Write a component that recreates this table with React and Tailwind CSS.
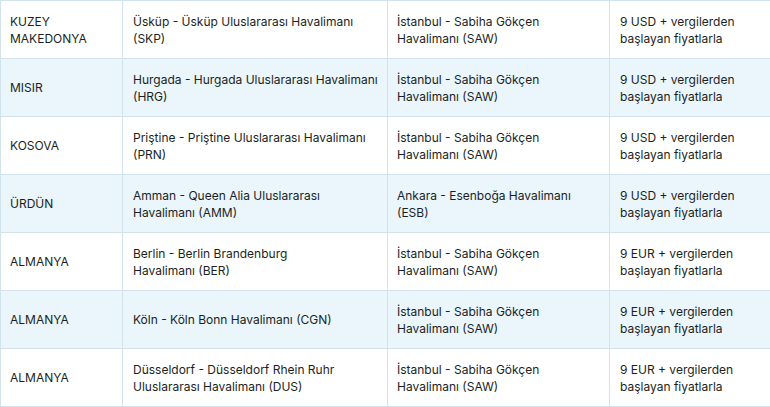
import React from "react";

const flights = [
  {
    country: ["KUZEY", "MAKEDONYA"],
    from: ["Üsküp - Üsküp Uluslararası Havalimanı", "(SKP)"],
    to: ["İstanbul - Sabiha Gökçen", "Havalimanı (SAW)"],
    price: ["9 USD + vergilerden", "başlayan fiyatlarla"],
  },
  {
    country: ["MISIR"],
    from: ["Hurgada - Hurgada Uluslararası Havalimanı", "(HRG)"],
    to: ["İstanbul - Sabiha Gökçen", "Havalimanı (SAW)"],
    price: ["9 USD + vergilerden", "başlayan fiyatlarla"],
  },
  {
    country: ["KOSOVA"],
    from: ["Priştine - Priştine Uluslararası Havalimanı", "(PRN)"],
    to: ["İstanbul - Sabiha Gökçen", "Havalimanı (SAW)"],
    price: ["9 USD + vergilerden", "başlayan fiyatlarla"],
  },
  {
    country: ["ÜRDÜN"],
    from: ["Amman - Queen Alia Uluslararası", "Havalimanı (AMM)"],
    to: ["Ankara - Esenboğa Havalimanı", "(ESB)"],
    price: ["9 USD + vergilerden", "başlayan fiyatlarla"],
  },
  {
    country: ["ALMANYA"],
    from: ["Berlin - Berlin Brandenburg", "Havalimanı (BER)"],
    to: ["İstanbul - Sabiha Gökçen", "Havalimanı (SAW)"],
    price: ["9 EUR + vergilerden", "başlayan fiyatlarla"],
  },
  {
    country: ["ALMANYA"],
    from: ["Köln - Köln Bonn Havalimanı (CGN)"],
    to: ["İstanbul - Sabiha Gökçen", "Havalimanı (SAW)"],
    price: ["9 EUR + vergilerden", "başlayan fiyatlarla"],
  },
  {
    country: ["ALMANYA"],
    from: ["Düsseldorf - Düsseldorf Rhein Ruhr", "Uluslararası Havalimanı (DUS)"],
    to: ["İstanbul - Sabiha Gökçen", "Havalimanı (SAW)"],
    price: ["9 EUR + vergilerden", "başlayan fiyatlarla"],
  },
];

const Lines = ({ lines }) =>
  lines.map((line, i) => (
    <React.Fragment key={i}>
      {i > 0 && <br />}
      {line}
    </React.Fragment>
  ));

const App = () => {
  return (
    <div className="w-[770px] h-[407px] overflow-hidden bg-white text-[#1b1f23] font-['Inter',sans-serif]">
      <table className="w-[772px] table-fixed border-collapse text-[12px] leading-[17px] whitespace-nowrap">
        <colgroup>
          <col className="w-[122px]" />
          <col className="w-[265px]" />
          <col className="w-[222px]" />
          <col className="w-[163px]" />
        </colgroup>
        <tbody>
          {flights.map((f, i) => (
            <tr
              key={i}
              className={`h-[58px] ${i % 2 === 1 ? "bg-[#eaf5fc]" : "bg-white"}`}
            >
              <td className="border border-[#d3e3ee] px-[9px] align-middle">
                <Lines lines={f.country} />
              </td>
              <td className="border border-[#d3e3ee] px-[10px] align-middle">
                <Lines lines={f.from} />
              </td>
              <td className="border border-[#d3e3ee] px-[9px] align-middle">
                <Lines lines={f.to} />
              </td>
              <td className="border border-[#d3e3ee] px-[10px] align-middle">
                <Lines lines={f.price} />
              </td>
            </tr>
          ))}
        </tbody>
      </table>
    </div>
  );
};

export default App;
